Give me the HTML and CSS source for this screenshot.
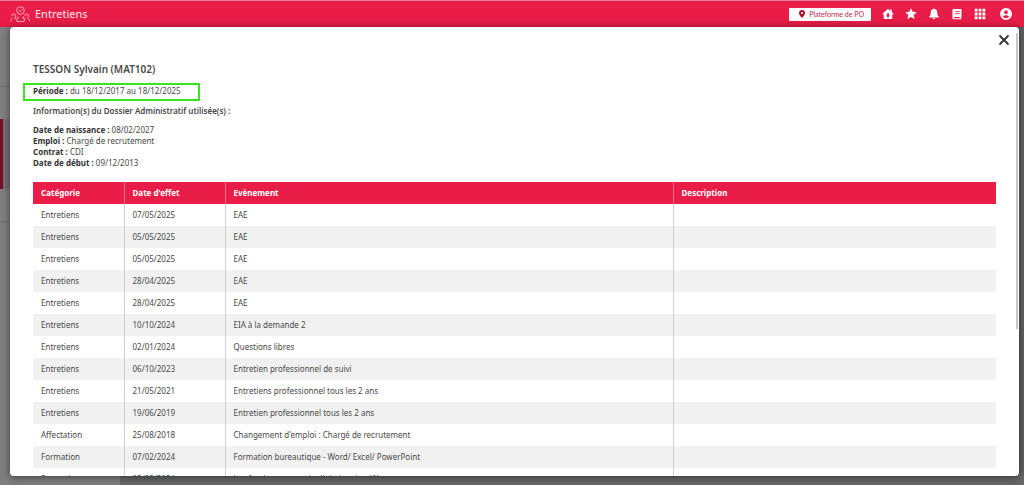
FILE: index.html
```
<!DOCTYPE html>
<html lang="fr">
<head>
<meta charset="utf-8">
<title>Entretiens</title>
<link rel="stylesheet" href="styles.css">
</head>
<body>
<header class="topbar">
  <div class="brand">
    <svg class="brand-icon" viewBox="0 0 20 16" aria-hidden="true"><circle cx="10.5" cy="4.5" r="3.8"/><path d="M8.7 4.5l1.4 1.4 2.4-2.8M1.800 10.200q0-2.200 1.900-2.200t1.900 2.200q0 1.400-.8 2l1.500 1M2.800 12.200Q.8 12.800.6 15.400M14.800 10.200q0-2.200 1.900-2.200t1.900 2.200q0 1.400-.8 2 1.700.6 1.900 3.200M15.800 12.200l-1.500 1M7 10.800l1 .2v1.500l-1.700.7.7 2.300h7l.7-2.300-1.700-.7V11l1-.2"/></svg>
    <h1 class="brand-name">Entretiens</h1>
  </div>
  <nav class="tools" aria-label="Outils">
    <button class="place" type="button"><svg class="pin" viewBox="0 0 6 8" aria-hidden="true"><path fill-rule="evenodd" d="M3 0a3 3 0 0 1 3 3c0 2-3 5-3 5S0 5 0 3a3 3 0 0 1 3-3zm0 2a1 1 0 1 0 0 2 1 1 0 0 0 0-2z"/></svg>Plateforme de PO</button>
    <button class="tool" type="button" aria-label="Accueil"><svg viewBox="0 0 12 12"><path fill-rule="evenodd" d="M6 .8 8.400 2.900V1.600h1.400v2.500l1.700 1.700-.7.900-.6-.4V11H1.800V6.300l-.6.4-.7-.9zM6 5.300a1.500 1.500 0 0 0-1 2.600V9.300h2V7.900A1.500 1.500 0 0 0 6 5.300z"/></svg></button>
    <button class="tool" type="button" aria-label="Favoris"><svg viewBox="0 0 12 12"><path d="m6 .2 1.700 3.600 4 .4-3 2.700.9 4.100L6 8.900 2.400 11l.9-4.100-3-2.700 4-.4z"/></svg></button>
    <button class="tool" type="button" aria-label="Notifications"><svg viewBox="0 0 12 12"><path d="M5.300 1.100a.7.700 0 0 1 1.400 0C8.600 1.600 9.300 3 9.300 4.700c0 2 .4 3 1.400 3.800v.9H1.300v-.9c1-.8 1.400-1.800 1.400-3.800 0-1.700.7-3.100 2.600-3.600zM4.700 9.900h2.600a1.300 1.300 0 0 1-2.600 0z"/></svg></button>
    <button class="tool" type="button" aria-label="Documentation"><svg viewBox="0 0 12 12"><path fill-rule="evenodd" d="M2.800 1h7.700v8h-.6v1.300h.6v.9H2.600Q1.400 11.200 1.400 9.900V2.400Q1.400 1 2.800 1zm1.400 2v.8h4.500V3zm0 2v.8h4.500V5zM3 9v1.200h5.800V9z"/></svg></button>
    <button class="tool" type="button" aria-label="Applications"><svg viewBox="0 0 12 12"><path d="M.7.700h2.800v2.800H.7zm3.900 0h2.800v2.800H4.600zm3.900 0h2.800v2.800H8.500zM.7 4.600h2.800v2.800H.7zm3.900 0h2.800v2.800H4.600zm3.900 0h2.800v2.800H8.500zM.7 8.500h2.800v2.800H.7zm3.900 0h2.800v2.800H4.600zm3.900 0h2.800v2.800H8.500z"/></svg></button>
    <button class="tool profile" type="button" aria-label="Profil"><svg viewBox="0 0 12 12"><path fill-rule="evenodd" d="M6 0a6 6 0 1 1 0 12A6 6 0 0 1 6 0zm0 2.300a1.900 1.900 0 1 0 0 3.800 1.900 1.900 0 0 0 0-3.800zM2.700 8.500Q4 10.300 6 10.300t3.300-1.800Q7.700 7.200 6 7.200T2.700 8.500z"/></svg></button>
  </nav>
</header>
<div class="backdrop">
  <div class="side"><div class="side-top"></div><div class="side-gap"></div><div class="side-active"></div><div class="side-item"></div></div>
  <div class="back-footer"></div>
</div>
<section class="modal" role="dialog" aria-labelledby="person">
  <button class="close" type="button" aria-label="Fermer"><svg viewBox="0 0 12 12"><path d="M1.500 1.500l9 9M10.500 1.500l-9 9"/></svg></button>
  <div class="thumb"></div>
  <div class="content">
    <h2 class="person" id="person">TESSON Sylvain (MAT102)</h2>
    <p class="period"><b>Période :</b> du 18/12/2017 au 18/12/2025</p>
    <h3 class="source">Information(s) du Dossier Administratif utilisée(s) :</h3>
    <ul class="facts">
      <li><b>Date de naissance :</b> 08/02/2027</li>
      <li><b>Emploi :</b> Chargé de recrutement</li>
      <li><b>Contrat :</b> CDI</li>
      <li><b>Date de début :</b> 09/12/2013</li>
    </ul>
    <table class="events">
      <colgroup><col class="col-category"><col class="col-date"><col class="col-event"><col></colgroup>
      <thead><tr><th>Catégorie</th><th>Date d'effet</th><th>Evènement</th><th>Description</th></tr></thead>
      <tbody>
        <tr><td>Entretiens</td><td>07/05/2025</td><td>EAE</td><td></td></tr>
        <tr><td>Entretiens</td><td>05/05/2025</td><td>EAE</td><td></td></tr>
        <tr><td>Entretiens</td><td>05/05/2025</td><td>EAE</td><td></td></tr>
        <tr><td>Entretiens</td><td>28/04/2025</td><td>EAE</td><td></td></tr>
        <tr><td>Entretiens</td><td>28/04/2025</td><td>EAE</td><td></td></tr>
        <tr><td>Entretiens</td><td>10/10/2024</td><td>EIA à la demande 2</td><td></td></tr>
        <tr><td>Entretiens</td><td>02/01/2024</td><td>Questions libres</td><td></td></tr>
        <tr><td>Entretiens</td><td>06/10/2023</td><td>Entretien professionnel de suivi</td><td></td></tr>
        <tr><td>Entretiens</td><td>21/05/2021</td><td>Entretiens professionnel tous les 2 ans</td><td></td></tr>
        <tr><td>Entretiens</td><td>19/06/2019</td><td>Entretien professionnel tous les 2 ans</td><td></td></tr>
        <tr><td>Affectation</td><td>25/08/2018</td><td>Changement d'emploi : Chargé de recrutement</td><td></td></tr>
        <tr><td>Formation</td><td>07/02/2024</td><td>Formation bureautique - Word/ Excel/ PowerPoint</td><td></td></tr>
        <tr><td>Formation</td><td>05/02/2024</td><td>Les fondamentaux du digital et du référencement</td><td></td></tr>
      </tbody>
    </table>
  </div>
</section>
</body>
</html>
```
FILE: styles.css
```
* { box-sizing: border-box; }
body {
  margin: 0;
  height: 100vh;
  display: flex;
  flex-direction: column;
  position: relative;
  overflow: hidden;
  font: 8px/11px "Noto Sans", "Open Sans", sans-serif;
  color: #484848;
}
h1, h2, h3, p, ul { margin: 0; padding: 0; }
button { border: 0; padding: 0; font: inherit; cursor: pointer; }
b { font-weight: 700; color: #333; }
.topbar {
  height: 27px;
  flex: none;
  display: flex;
  align-items: center;
  justify-content: space-between;
  padding: 0 12px 0 10px;
  background: #e91d47;
  border-top: 1px solid #e58296;
}
.brand { display: flex; align-items: center; gap: 5px; }
.brand-icon { width: 20px; height: 16px; fill: none; stroke: #ffc4cf; stroke-width: .8; }
.brand-name { font-size: 11px; line-height: 16px; font-weight: 400; color: #ffe9ed; }
.tools { display: flex; align-items: center; gap: 11px; }
.place {
  display: flex;
  align-items: center;
  gap: 4px;
  padding: 0 7px 0 10px;
  height: 13px;
  border-radius: 1px;
  background: #fff;
  color: #bd284a;
  font-family: Lato, sans-serif;
  font-size: 7px;
}
.pin { width: 6px; height: 8px; fill: #b0102f; }
.tool { width: 12px; height: 12px; background: none; }
.tool svg { display: block; width: 12px; height: 12px; fill: #fff; }
.profile { margin-left: 3px; }
.backdrop { flex: 1; display: flex; flex-direction: column; background: #7f7f7f; }
.side { flex: 1; background: linear-gradient(to right, #808080 0 50%, #606264 50%); }
.side-top { width: 10px; height: 60px; border-bottom: 1px solid #6c6c6c; }
.side-gap { width: 10px; height: 32px; }
.side-active { width: 10px; height: 70px; border-left: 3px solid #7b0d25; background: #727272; }
.side-item { width: 10px; height: 33px; border-bottom: 1px solid #6c6c6c; }
.back-footer { height: 12px; background: linear-gradient(to right, #7f7f7f 120px, #66686a 120px); }
.modal {
  position: absolute;
  inset: 27px 5px 9px 10px;
  overflow: hidden;
  border-radius: 4px;
  background: #fff;
  box-shadow: 0 1px 8px #0008;
}
.close { position: absolute; top: 7px; right: 9px; width: 12px; height: 12px; background: none; }
.close svg { display: block; width: 12px; height: 12px; fill: none; stroke: #333; stroke-width: 1.8; }
.thumb { position: absolute; top: 6px; right: 1px; width: 2px; height: 66%; background: #c6c6c6; }
.content { padding: 35px 23px 0; }
.person { font-size: 10px; line-height: 15px; font-weight: 600; }
.period {
  width: 177px;
  margin: 6px 0 0 -10px;
  padding: 0 8px 2px;
  border: 2px solid #36e51c;
  line-height: 12px;
}
.source { margin-top: 4px; font-size: 8px; line-height: 11px; font-weight: 600; }
.facts { margin: 8px 0 14px; list-style: none; }
.events { width: 100%; border-collapse: collapse; table-layout: fixed; }
.col-category { width: 91px; }
.col-date { width: 101px; }
.col-event { width: 448px; }
.events th, .events td { height: 22px; padding: 0 8px 1px; text-align: left; vertical-align: middle; }
.events th { background: #e91d47; color: #fff; font-weight: 700; }
.events th + th { border-left: 1px solid #ee6f88; }
.events td + td { border-left: 1px solid #cfcfcf; }
.events tbody tr:nth-child(even) { background: #f1f1f1; }
```
